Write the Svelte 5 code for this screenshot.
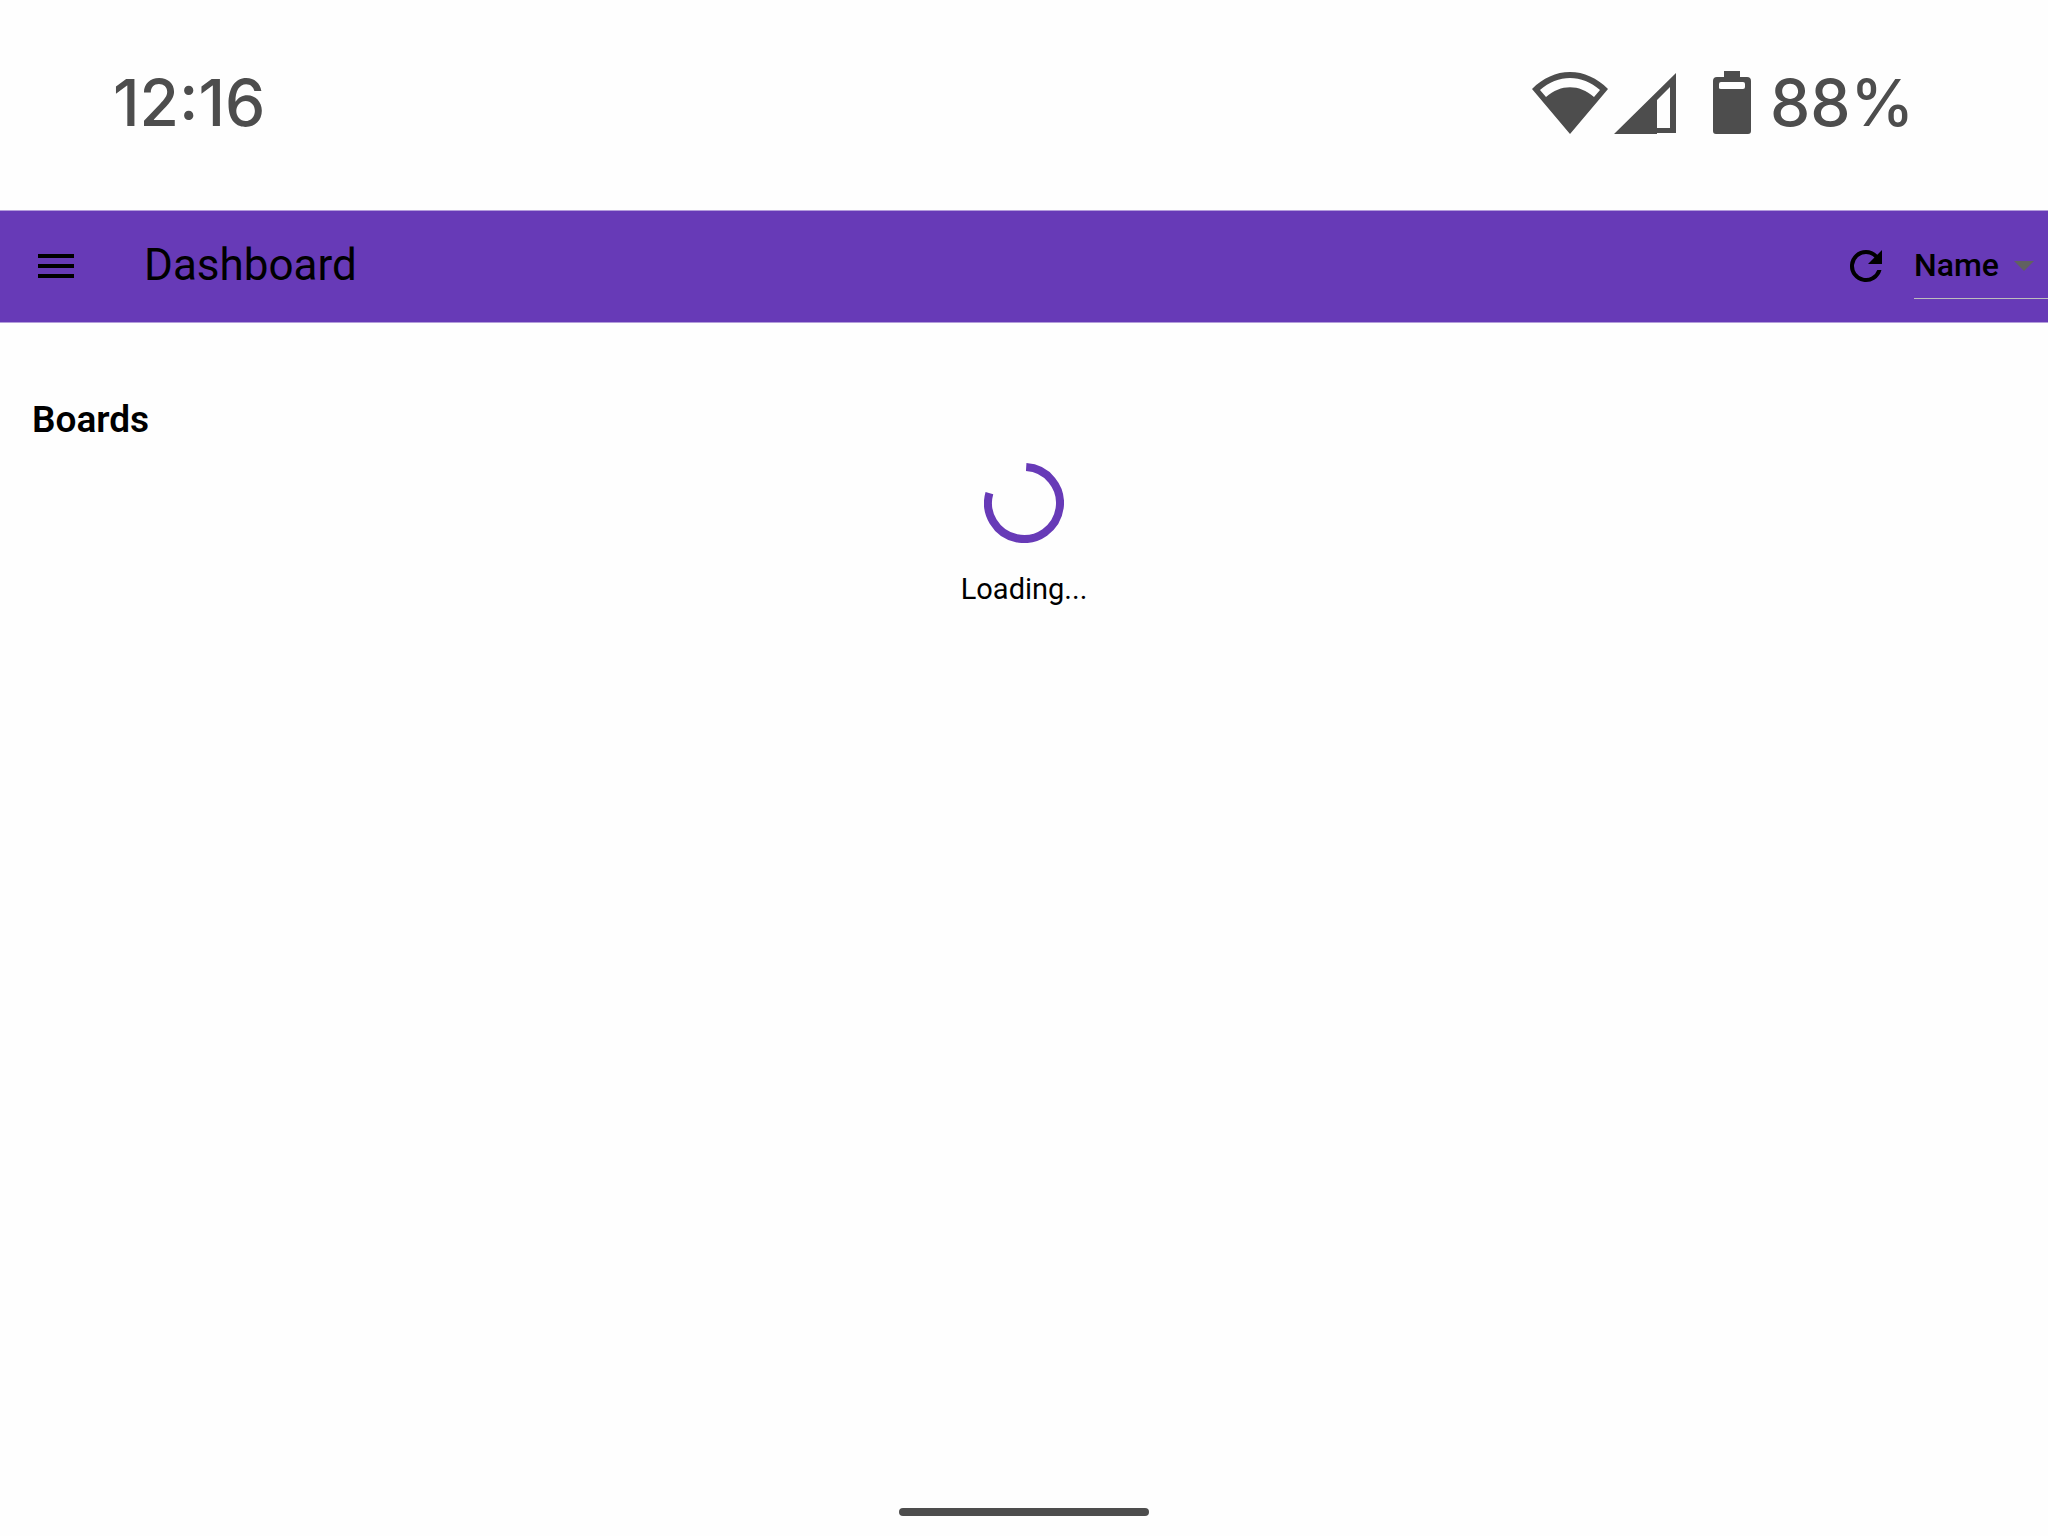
<script>
  let sort = $state('name');
</script>

<div class="screen">
  <div class="status">
    <span>12:16</span>
    <div class="indicators">
      <svg class="wifi" viewBox="0 0 76 64" aria-hidden="true">
        <path fill-rule="evenodd" d="M0 18C11 7 24 1 38 1s27 6 38 17L38 63ZM8 19l6 7c15-13 33-13 48 0l6-7C50 3 26 3 8 19Z" />
      </svg>
      <svg class="signal" viewBox="0 0 62 64" aria-hidden="true">
        <path fill-rule="evenodd" d="M0 63 62 2v60H43v1ZM43 29v28h13V16Z" />
      </svg>
      <svg class="battery" viewBox="0 0 40 64" aria-hidden="true">
        <path fill-rule="evenodd" d="M12 0h16v6h7q4 0 4 4v50q0 3-3 3H4q-3 0-3-3V10q0-4 4-4h7ZM9 11q-2 0-2 2v4q0 1 2 1h22q2 0 2-2v-3q0-2-2-2Z" />
      </svg>
      <span>88%</span>
    </div>
  </div>

  <header>
    <button aria-label="Open menu">
      <svg viewBox="0 0 24 24"><path d="M3 18h18v-2H3v2zm0-5h18v-2H3v2zm0-7v2h18V6H3z" /></svg>
    </button>
    <h1>Dashboard</h1>
    <button aria-label="Refresh">
      <svg viewBox="0 0 24 24"><path d="M17.65 6.35A7.96 7.96 0 0 0 12 4a8 8 0 1 0 7.73 10h-2.08A6 6 0 1 1 12 6c1.66 0 3.14.69 4.22 1.78L13 11h7V4l-2.35 2.35z" /></svg>
    </button>
    <div class="sort">
      <select aria-label="Sort by" bind:value={sort}>
        <option value="name">Name</option>
        <option value="date">Date</option>
      </select>
      <svg viewBox="0 0 24 24" aria-hidden="true"><path d="m7 10 5 5 5-5z" /></svg>
    </div>
  </header>

  <main>
    <h2>Boards</h2>
    <div class="loading" role="status">
      <svg viewBox="-40 -40 80 80" aria-hidden="true"><path d="M2.2-35.9A36 36 0 1 1-34.6-9.9" /></svg>
      <span>Loading...</span>
    </div>
  </main>

  <div class="home"></div>
</div>

<style>
  :global(body) {
    margin: 0;
    background: #fefefe;
  }
  .screen {
    display: flex;
    flex-direction: column;
    min-height: 100vh;
    color: #000;
    font-family: Roboto, sans-serif;
  }
  .status {
    display: flex;
    justify-content: space-between;
    align-items: center;
    box-sizing: border-box;
    height: 210px;
    padding: 0 134px 4px 113px;
    color: #4d4d4d;
    font: 500 64px/80px Inter, sans-serif;
  }
  .indicators {
    display: flex;
    align-items: center;
  }
  .indicators svg {
    height: 64px;
    fill: currentColor;
  }
  .wifi {
    width: 76px;
    margin-right: 6px;
  }
  .signal {
    width: 62px;
    margin-right: 36px;
  }
  .battery {
    width: 40px;
    margin-right: 18px;
  }
  header {
    display: flex;
    align-items: center;
    height: 109px;
    padding-bottom: 2px;
    background: #673ab7;
    border-top: 1px solid #b39ddb;
    border-bottom: 1px solid #b39ddb;
  }
  button {
    display: flex;
    padding: 0 32px;
    border: 0;
    background: none;
    color: inherit;
  }
  button svg {
    width: 48px;
    height: 48px;
    fill: currentColor;
  }
  h1 {
    flex: 1;
    margin: 0 0 0 32px;
    font-size: 44px;
    font-weight: 400;
    line-height: 56px;
    padding-bottom: 2px;
  }
  h1 + button {
    padding-right: 24px;
  }
  .sort {
    position: relative;
    display: flex;
    width: 134px;
    height: 65px;
    border-bottom: 1px solid #bdbdbd;
  }
  select {
    appearance: none;
    width: 100%;
    padding: 0;
    border: 0;
    background: none;
    color: inherit;
    font: 500 32px/64px Roboto, sans-serif;
  }
  .sort svg {
    position: absolute;
    top: 8px;
    right: 0;
    width: 48px;
    height: 48px;
    fill: #616161;
    pointer-events: none;
  }
  main {
    flex: 1;
    padding: 72px 32px;
  }
  h2 {
    margin: 0;
    font-size: 37px;
    font-weight: 600;
    line-height: 50px;
  }
  .loading {
    display: flex;
    flex-direction: column;
    align-items: center;
    gap: 26px;
    padding-top: 18px;
    font-size: 29px;
    line-height: 40px;
  }
  .loading svg {
    width: 80px;
    height: 80px;
    fill: none;
    stroke: #673ab7;
    stroke-width: 8;
  }
  .home {
    width: 250px;
    height: 8px;
    margin: 0 auto 20px;
    border-radius: 4px;
    background: #4d4d4d;
  }
</style>
